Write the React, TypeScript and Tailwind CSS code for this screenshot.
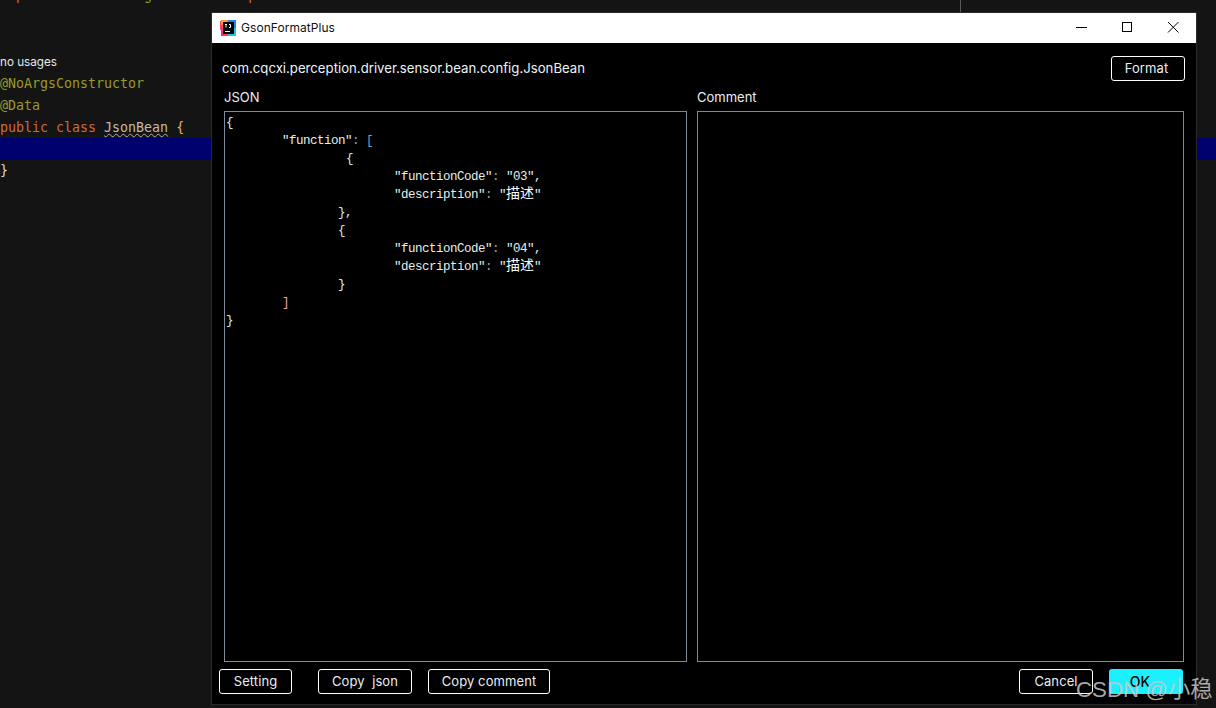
const mono = "font-['DejaVu_Sans_Mono','Liberation_Mono',monospace]";
const sans = "font-['Inter','Noto_Sans','Liberation_Sans',sans-serif]";
const jsonFont = "font-['Liberation_Mono','Noto_Sans_CJK_SC',monospace]";

function Btn({ label, className = "" }: { label: string; className?: string }) {
  return (
    <button className={`h-[25px] rounded-[3px] border border-white bg-black text-[13px] tracking-[0.1px] text-[#e8eef4] whitespace-pre ${className}`}>
      {label}
    </button>
  );
}

const K = ({ children }: { children: string }) => <span className="text-[#e4f0ea]">{children}</span>;
const Q = () => <span className="text-[#e4f0ea]">"</span>;
const Cjk = () => (
  <>
    <Q />
    <span className="inline-block w-[28px] text-[14px] leading-[14px] tracking-normal text-white">描述</span>
    <Q />
  </>
);
const Colon = () => <span className="text-[#8fa8a0]">{": "}</span>;

function JsonLine({ indent, children }: { indent: number; children: React.ReactNode }) {
  return (
    <div className="h-[18px] leading-[19px] whitespace-pre" style={{ paddingLeft: indent }}>
      {children}
    </div>
  );
}

function Editor() {
  return (
    <div className={`h-[708px] w-full overflow-hidden bg-[#141414] text-[13.3px] ${mono}`}>
      <div className="h-[6px] overflow-hidden">
        <div className="-mt-[14px] h-[20px] leading-[20px] whitespace-pre text-[#cf6a3a]">
          {"  p"}
          <span className="text-[#8aa020]">{"               g"}</span>
          {"            p"}
        </div>
      </div>
      <div className="mt-[47px] h-[18px] leading-[18px] text-[11.7px] text-[#e6e6e6] font-['Inter',sans-serif]">no usages</div>
      <div className="h-[22px] leading-[24px] mt-[1px] text-[#9a9a28]">@NoArgsConstructor</div>
      <div className="h-[22px] leading-[24px] text-[#9a9a28]">@Data</div>
      <div className="h-[22px] leading-[24px] text-[#cf6a3a]">
        public class <span className="text-[#c4b9a2] underline decoration-wavy decoration-[#b0b0b0] decoration-1">JsonBean</span> <span className="text-[#e2b36c]">{"{"}</span>
      </div>
      <div className="h-[22px] bg-[#00006e]" />
      <div className="h-[22px] leading-[22px] text-[#d8d8d8]">{"}"}</div>
    </div>
  );
}

function AppIcon() {
  return (
    <svg width="16" height="16" viewBox="0 0 16 16" className="shrink-0">
      <rect x="0" y="1" width="9" height="9" fill="#ff3a7a" />
      <rect x="1" y="0" width="7" height="5" fill="#ff9a2e" />
      <rect x="8" y="0" width="8" height="8" fill="#2a7cff" />
      <rect x="1" y="8" width="8" height="8" fill="#ff2f6d" />
      <rect x="8" y="8" width="8" height="8" fill="#18c8e8" />
      <rect x="3" y="2" width="11" height="12" fill="#000" />
      <rect x="5" y="11" width="5" height="1" fill="#fff" />
      <path d="M5 4.5h2M6 4.5v3M9 4.5h1.5v3H9" stroke="#fff" strokeWidth="1" fill="none" />
    </svg>
  );
}

export default function App() {
  return (
    <div className="relative h-[708px] w-[1216px] overflow-hidden bg-[#141414]">
      <Editor />
      <div className="absolute left-[960px] top-0 h-[13px] w-[1px] bg-[#5a5a5a]" />
      <div className={`absolute left-[212px] top-[13px] flex h-[691px] w-[984px] flex-col bg-black ring-1 ring-[#2a2a2a] ${sans}`}>
        <div className="flex h-[30px] shrink-0 items-center bg-white pl-[8px] text-black">
          <AppIcon />
          <span className="ml-[5px] text-[12px] tracking-[0.05px] text-[#111]">GsonFormatPlus</span>
          <div className="ml-auto flex items-center">
            <svg width="46" height="30" viewBox="0 0 46 30"><path d="M18 14.5h11" stroke="#000" /></svg>
            <svg width="46" height="30" viewBox="0 0 46 30"><rect x="18.5" y="9.5" width="9" height="9" fill="none" stroke="#000" /></svg>
            <svg width="46" height="30" viewBox="0 0 46 30"><path d="M18 9l10.5 10.5M28.5 9L18 19.5" stroke="#000" /></svg>
          </div>
        </div>
        <div className="flex h-[45px] shrink-0 items-center justify-between pl-[10px] pr-[11px] pt-[6px]">
          <span className="text-[13.2px] text-[#eef3f8]">com.cqcxi.perception.driver.sensor.bean.config.JsonBean</span>
          <Btn label="Format" className="w-[74px] pr-[3px]" />
        </div>
        <div className="flex min-h-0 flex-1 gap-[10px] pl-[12px] pr-[12px]">
          <div className="flex w-[463px] flex-col">
            <div className="h-[18px] text-[13px] leading-[18px] text-[#e8eef4]">JSON</div>
            <div className={`mt-[5px] h-[551px] border border-[#7c8a99] pl-[1px] pt-[2px] text-[12.5px] tracking-[-0.5px] text-[#d8efe6] ${jsonFont}`}>
              <JsonLine indent={0}>{"{"}</JsonLine>
              <JsonLine indent={56}><K>{'"function"'}</K><Colon /><span className="text-[#4fb3c8]">[</span></JsonLine>
              <JsonLine indent={120}>{"{"}</JsonLine>
              <JsonLine indent={168}><K>{'"functionCode"'}</K><Colon /><K>{'"03"'}</K>,</JsonLine>
              <JsonLine indent={168}><K>{'"description"'}</K><Colon /><Cjk /></JsonLine>
              <JsonLine indent={112}>{"},"}</JsonLine>
              <JsonLine indent={112}>{"{"}</JsonLine>
              <JsonLine indent={168}><K>{'"functionCode"'}</K><Colon /><K>{'"04"'}</K>,</JsonLine>
              <JsonLine indent={168}><K>{'"description"'}</K><Colon /><Cjk /></JsonLine>
              <JsonLine indent={112}>{"}"}</JsonLine>
              <JsonLine indent={56}><span className="text-[#f0a0a0]">]</span></JsonLine>
              <JsonLine indent={0}>{"}"}</JsonLine>
            </div>
          </div>
          <div className="flex w-[487px] flex-col">
            <div className="h-[18px] text-[13px] leading-[18px] text-[#e8eef4]">Comment</div>
            <div className="mt-[5px] h-[551px] border border-[#7c8a99]" />
          </div>
        </div>
        <div className="flex h-[35px] shrink-0 items-start pl-[7px] pr-[13px]">
          <Btn label="Setting" className="w-[73px]" />
          <Btn label="Copy  json" className="ml-[26px] w-[94px]" />
          <Btn label="Copy comment" className="ml-[16px] w-[122px]" />
          <Btn label="Cancel" className="ml-auto w-[74px]" />
          <button className="ml-[16px] h-[25px] w-[74px] rounded-[3px] bg-[#1cf0ff] pr-[12px] text-[14px] font-medium text-black">OK</button>
        </div>
      </div>
      <div className="absolute left-[1076px] top-[670px] font-['Liberation_Sans',sans-serif] text-[22.3px] leading-[34px] whitespace-pre text-[#c8c8c8]/85">
        CSDN @<span className="font-['Noto_Sans_CJK_SC',sans-serif]">小稳</span>
      </div>
    </div>
  );
}
